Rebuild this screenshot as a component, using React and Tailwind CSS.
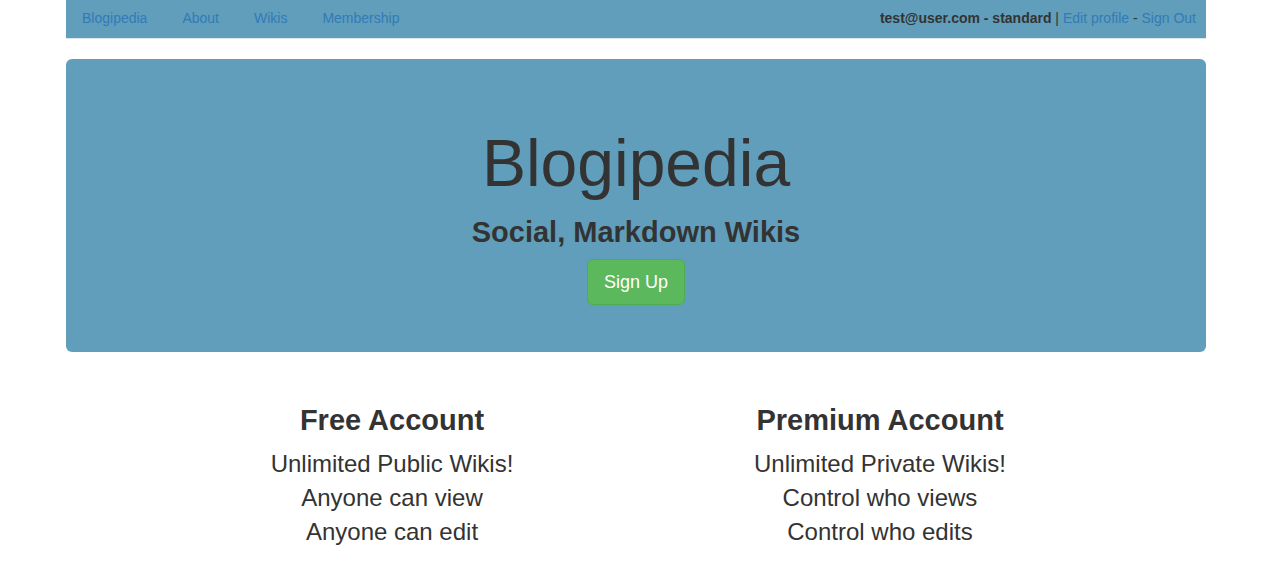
import React from 'react';

const Navbar = () => {
  const links = ['Blogipedia', 'About', 'Wikis', 'Membership'];

  return (
    <nav className="h-[39px] bg-[#609ebb] border-b border-[#dbe8ee] flex items-center justify-between pl-4 pr-[10px] pb-[2px] text-[14px]">
      <ul className="flex items-center gap-[35px]">
        {links.map((name) => (
          <li key={name}>
            <a href="#" className="text-[#337ab7] hover:underline">{name}</a>
          </li>
        ))}
      </ul>
      <div className="text-[#333]">
        <span className="font-bold">test@user.com - standard</span>
        {' | '}
        <a href="#" className="text-[#337ab7]">Edit profile</a>
        {' - '}
        <a href="#" className="text-[#337ab7]">Sign Out</a>
      </div>
    </nav>
  );
};

const Plan = ({ title, items }) => (
  <div className="w-[488px] flex flex-col items-center">
    <h2 className="text-[29px] font-bold leading-[32px]">{title}</h2>
    <div className="mt-[11px] flex flex-col items-center">
      {items.map((item) => (
        <p key={item} className="text-[24px] leading-[34px]">{item}</p>
      ))}
    </div>
  </div>
);

export default function App() {
  return (
    <div className="min-h-screen bg-white text-[#333]" style={{ fontFamily: '"Liberation Sans", Arial, sans-serif' }}>
      <div className="w-[1140px] ml-[66px]">
        <Navbar />

        <div className="mt-[20px] h-[293px] bg-[#609ebb] rounded-md flex flex-col items-center pt-[68px]">
          <h1 className="text-[66px] leading-[72px]">Blogipedia</h1>
          <h2 className="mt-[16px] text-[29px] font-bold leading-[34px]">Social, Markdown Wikis</h2>
          <a
            href="#"
            className="mt-[10px] h-[46px] px-4 flex items-center bg-[#5cb85c] border border-[#4cae4c] rounded-md text-white text-[18px]"
          >
            Sign Up
          </a>
        </div>

        <div className="mt-[52px] flex justify-center">
          <Plan
            title="Free Account"
            items={['Unlimited Public Wikis!', 'Anyone can view', 'Anyone can edit']}
          />
          <Plan
            title="Premium Account"
            items={['Unlimited Private Wikis!', 'Control who views', 'Control who edits']}
          />
        </div>
      </div>
    </div>
  );
}
